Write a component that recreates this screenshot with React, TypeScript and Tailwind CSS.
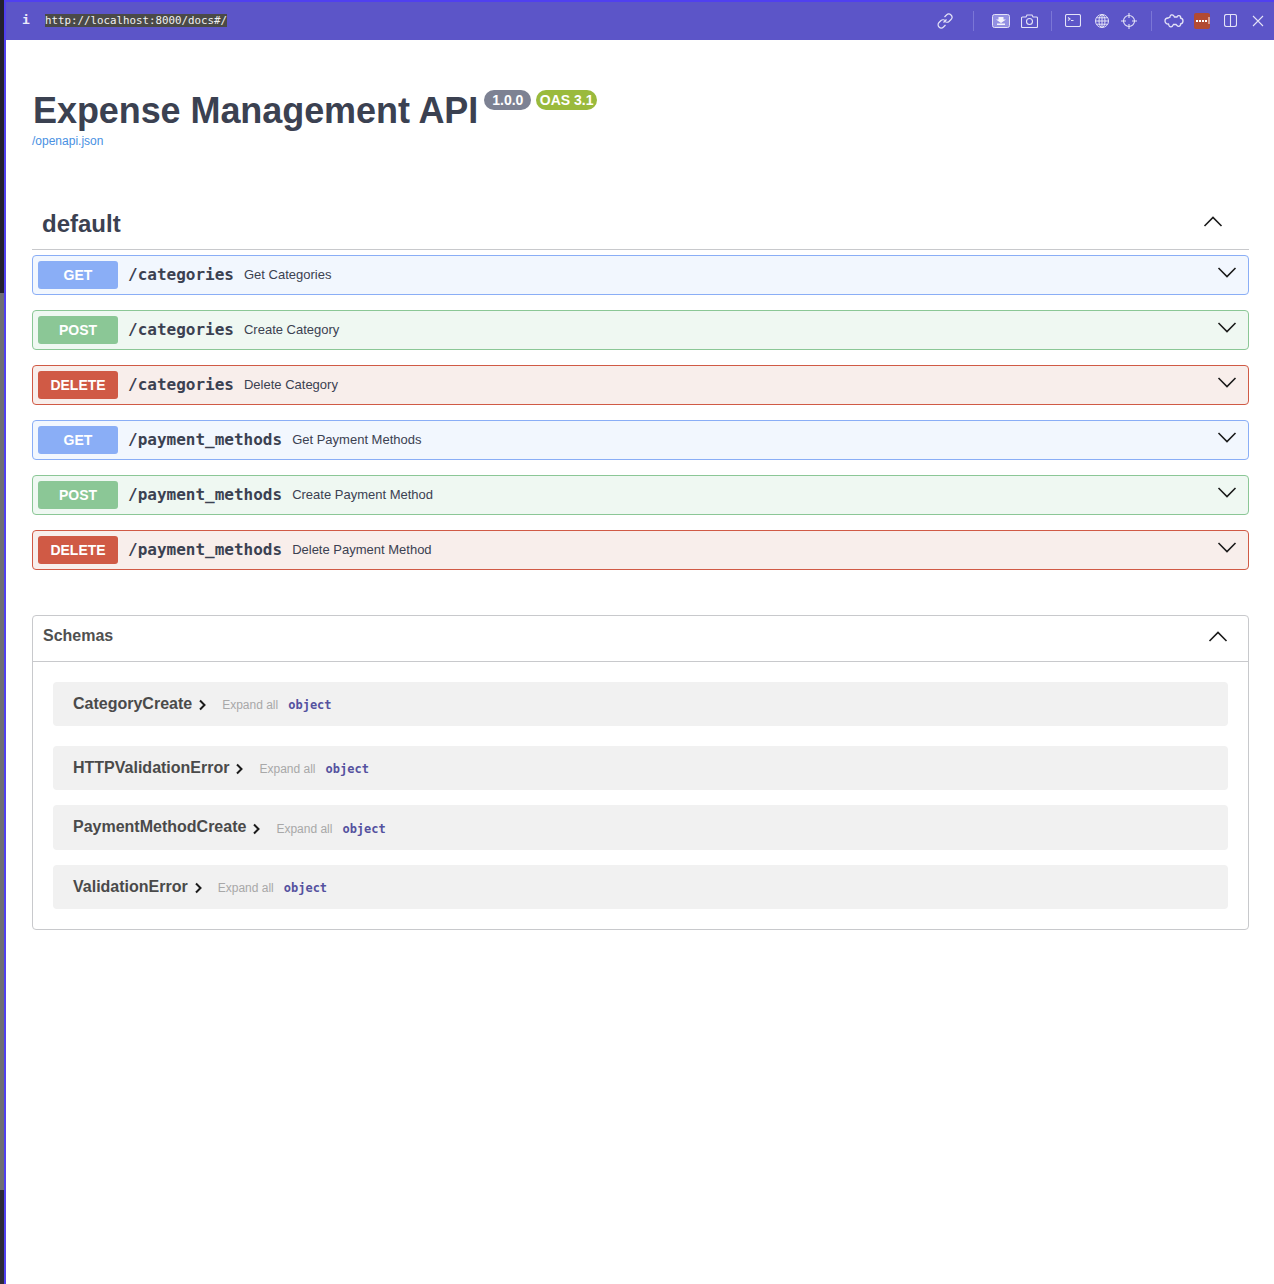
const sans = 'font-["Liberation_Sans",Arial,sans-serif]';

type Op = { method: 'GET' | 'POST' | 'DELETE'; path: string; summary: string };

const ops: Op[] = [
  { method: 'GET', path: '/categories', summary: 'Get Categories' },
  { method: 'POST', path: '/categories', summary: 'Create Category' },
  { method: 'DELETE', path: '/categories', summary: 'Delete Category' },
  { method: 'GET', path: '/payment_methods', summary: 'Get Payment Methods' },
  { method: 'POST', path: '/payment_methods', summary: 'Create Payment Method' },
  { method: 'DELETE', path: '/payment_methods', summary: 'Delete Payment Method' },
];

const opStyles = {
  GET: { row: 'bg-[#f2f7fe] border-[#8aaef6]', badge: 'bg-[#8aaef6]' },
  POST: { row: 'bg-[#eff8f2] border-[#8bc796]', badge: 'bg-[#8bc796]' },
  DELETE: { row: 'bg-[#f8eeeb] border-[#d05a45]', badge: 'bg-[#d05a45]' },
};

const schemas = [
  { name: 'CategoryCreate', className: 'h-11 mb-5' },
  { name: 'HTTPValidationError', className: 'h-11 mb-[15px]' },
  { name: 'PaymentMethodCreate', className: 'h-[45px] mb-[15px]' },
  { name: 'ValidationError', className: 'h-11' },
];

const Chevron = ({ up = false, className = '' }: { up?: boolean; className?: string }) => (
  <svg className={className} width="20" height="20" viewBox="0 0 20 20" fill="none" stroke="#1b1b1b" strokeWidth="1.6">
    <path d={up ? 'M1.5 14 L10 5.5 L18.500 14' : 'M1.500 6 L10 14.500 L18.500 6'} />
  </svg>
);

const ToolbarIcons = () => (
  <div className="flex items-center text-[#e4e3f7] -mt-px">
    <svg className="mr-[20px]" width="16" height="16" viewBox="0 0 16 16" fill="none" stroke="currentColor" strokeWidth="1.2">
      <path d="M6.500 9.500 L9.500 6.500" />
      <path d="M7.500 4 L9.500 2 a3.100 3.100 0 0 1 4.500 4.500 L12 8.500 a3.100 3.100 0 0 1 -4.500 -0.500" />
      <path d="M8.500 12 L6.500 14 a3.100 3.100 0 0 1 -4.500 -4.500 L4 7.500 a3.100 3.100 0 0 1 4.500 0.500" />
    </svg>
    <div className="w-px h-[20px] bg-[#7b76d6] mr-[18px]" />
    <svg className="mr-[11px]" width="18" height="14" viewBox="0 0 18 14">
      <rect x="0.500" y="0.500" width="17" height="13" rx="2" fill="#9390e2" stroke="currentColor" />
      <path d="M6.500 3h5v2.500H14L9 9 4 5.500h2.500z M5 9.500h8V11H5z" fill="#f4f3fc" />
    </svg>
    <svg className="mr-[13px]" width="17" height="14" viewBox="0 0 17 14" fill="none" stroke="currentColor" strokeWidth="1.1">
      <path d="M1.500 3h3.500l1-2h5l1 2h3.500a1 1 0 0 1 1 1v8.500a1 1 0 0 1 -1 1h-14a1 1 0 0 1 -1 -1V4a1 1 0 0 1 1 -1z" />
      <circle cx="8.500" cy="7.500" r="3" />
    </svg>
    <div className="w-px h-[20px] bg-[#7b76d6] mr-[13px]" />
    <svg className="mr-[14px]" width="16" height="13" viewBox="0 0 16 13" fill="none" stroke="currentColor" strokeWidth="1.1">
      <rect x="0.500" y="0.500" width="15" height="12" rx="1.500" />
      <path d="M3 3.500 L5 5 L3 6.500 M6 6.500h2.500" />
    </svg>
    <svg className="mr-[12px]" width="14" height="14" viewBox="0 0 14 14" fill="none" stroke="currentColor" strokeWidth="1">
      <circle cx="7" cy="7" r="6.500" />
      <ellipse cx="7" cy="7" rx="3" ry="6.500" />
      <path d="M7 0.500v13 M0.500 7h13 M1.500 3.800h11 M1.500 10.200h11" />
    </svg>
    <svg className="mr-[14px]" width="16" height="16" viewBox="0 0 16 16" fill="none" stroke="currentColor" strokeWidth="1.1">
      <circle cx="8" cy="8" r="5.500" />
      <path d="M8 0v5 M8 11v5 M0 8h5 M11 8h5" />
    </svg>
    <div className="w-px h-[20px] bg-[#7b76d6] mr-[12px]" />
    <svg className="mr-[10px]" width="20" height="14" viewBox="0 0 20 14" fill="none" stroke="currentColor" strokeWidth="1.300">
      <path d="M6 3 V2.500 a2 2 0 0 1 3.500 -1 L10.500 3 H13 a2 2 0 0 1 3.500 -0.500 L16.500 4 a3 3 0 0 1 2.500 3 a3 3 0 0 1 -2.500 3 v1 a2 2 0 0 1 -3.500 0.500 L12 10.500 H9.500 L8.500 12 a2 2 0 0 1 -3.500 -0.500 L4.500 10 A3 3 0 0 1 1 7 A3 3 0 0 1 4 4 z" />
    </svg>
    <div className="w-4 h-4 rounded-[2px] bg-[#b24a32] mr-[14px] flex items-center pl-[2px] gap-px">
      <span className="w-[2px] h-[2px] bg-white" />
      <span className="w-[2px] h-[2px] bg-white" />
      <span className="w-[2px] h-[2px] bg-white" />
      <span className="w-[2px] h-[2px] bg-white" />
      <span className="w-[2px] h-[7px] bg-[#d99c8e]" />
    </div>
    <svg className="mr-[15px]" width="13" height="13" viewBox="0 0 13 13" fill="none" stroke="currentColor" strokeWidth="1.100">
      <rect x="0.500" y="0.500" width="12" height="12" rx="2" />
      <path d="M6.500 0.500v12" />
    </svg>
    <svg className="mr-[10px]" width="12" height="12" viewBox="0 0 12 12" fill="none" stroke="currentColor" strokeWidth="1.100">
      <path d="M1 1 L11 11 M11 1 L1 11" />
    </svg>
  </div>
);

export default function App() {
  return (
    <div className={`flex w-[1274px] min-h-[1284px] bg-white ${sans}`}>
      <div className="w-1 shrink-0 flex flex-col">
        <div className="h-[293px] bg-[#23212f]" />
        <div className="h-[897px] bg-[#6e6e74]" />
        <div className="flex-1 bg-[#2c2a38]" />
      </div>
      <div className="w-[2px] shrink-0 bg-[#5040f0]" />
      <main className="flex-1 min-w-0">
        <header className="h-10 bg-[#5c55c8] border-t-2 border-[#5040f0] flex items-center justify-between">
          <div className="flex items-center -mt-[2px]">
            <span className="ml-[16px] w-[23px] font-['DejaVu_Sans_Mono',monospace] text-[13px] font-bold text-[#ecebfa]">i</span>
            <span className="font-['DejaVu_Sans_Mono',monospace] text-[10.800px] leading-[13px] text-[#f0f0f0] bg-[#4a4a48]">http://localhost:8000/docs#/</span>
          </div>
          <ToolbarIcons />
        </header>

        <div className="pl-[26px] pr-[25px]">
          <div className="pt-[50px]">
            <h1 className="text-[36px] leading-[42px] font-bold text-[#3b4151] flex items-start pl-px tracking-[-0.002em]">
              Expense Management API
              <span className="ml-[6px] h-5 px-2 rounded-[10px] bg-[#7d8293] text-white text-[14px] leading-5 tracking-normal">1.0.0</span>
              <span className="ml-[5px] h-5 px-[3.500px] rounded-[10px] bg-[#9aba3c] text-white text-[14px] leading-5 tracking-normal">OAS 3.1</span>
            </h1>
            <a className="block text-[12px] leading-[14px] mt-[2px] text-[#4990e2]">/openapi.json</a>
          </div>

          <div className="mt-[50px] h-[52px] border-b border-[#c8c9cc] flex items-center justify-between pl-[10px] pr-[26px]">
            <h2 className="text-[24px] font-bold text-[#3b4151]">default</h2>
            <Chevron up className="-mt-[3px]" />
          </div>

          <div className="mt-[5px] flex flex-col gap-[15px]">
            {ops.map((op) => (
              <div key={op.method + op.path} className={`h-10 rounded-[4px] border flex items-center pl-[5px] pr-[11px] ${opStyles[op.method].row}`}>
                <span className={`w-20 h-[28px] rounded-[3px] flex items-center justify-center text-white text-[14px] font-bold ${opStyles[op.method].badge}`}>{op.method}</span>
                <span className="ml-[10px] font-['DejaVu_Sans_Mono',monospace] font-bold text-[16px] text-[#3b4151]">{op.path}</span>
                <span className="ml-[10px] text-[13px] text-[#3b4151]">{op.summary}</span>
                <Chevron className="ml-auto -mt-[6px]" />
              </div>
            ))}
          </div>

          <section className="mt-[45px] h-[315px] rounded-[4px] border border-[#c8c9cc]">
            <div className="h-[46px] border-b border-[#c8c9cc] flex items-center justify-between pl-[10px] pr-[20px]">
              <h3 className="text-[16px] font-bold text-[#505050] -mt-[6px]">Schemas</h3>
              <Chevron up className="-mt-[3px]" />
            </div>
            <div className="px-5 pt-5">
              {schemas.map((s) => (
                <div key={s.name} className={`rounded-[4px] bg-[#f1f1f1] flex items-center pl-5 pt-[2px] ${s.className}`}>
                  <span className="text-[16px] font-bold text-[#4a4a4a] -mt-[3px]">{s.name}</span>
                  <svg className="ml-[6px] mr-[15px]" width="9" height="12" viewBox="0 0 9 12" fill="none" stroke="#1b1b1b" strokeWidth="2"><path d="M2 1.500 L6.500 6 L2 10.500" /></svg>
                  <span className="text-[12px] text-[#a8a8a8]">Expand all</span>
                  <span className="ml-[10px] font-['DejaVu_Sans_Mono',monospace] font-bold text-[12px] text-[#55529f]">object</span>
                </div>
              ))}
            </div>
          </section>
        </div>
      </main>
    </div>
  );
}
